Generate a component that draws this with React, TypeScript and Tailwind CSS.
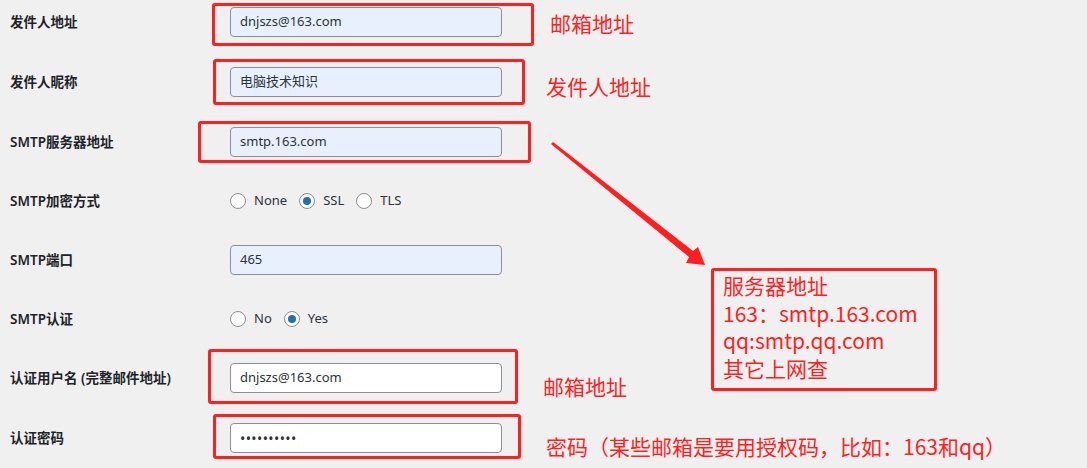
import React from "react";

const cjk = "font-['Segoe_UI','Noto_Sans','Noto_Sans_CJK_SC',sans-serif]";
const redText = "font-['Noto_Sans_CJK_SC','Noto_Sans',sans-serif] text-[#ff1f1f]";

type Row = {
	label: string;
	mt: string;
	kind: "input" | "radio" | "password";
	value?: string;
	filled?: boolean;
	options?: { name: string; checked?: boolean }[];
};

const rows: Row[] = [
	{ label: "发件人地址", mt: "mt-0", kind: "input", value: "dnjszs@163.com", filled: true },
	{ label: "发件人昵称", mt: "mt-[30px]", kind: "input", value: "电脑技术知识", filled: true },
	{ label: "SMTP服务器地址", mt: "mt-[30px]", kind: "input", value: "smtp.163.com", filled: true },
	{
		label: "SMTP加密方式",
		mt: "mt-[29px]",
		kind: "radio",
		options: [{ name: "None" }, { name: "SSL", checked: true }, { name: "TLS" }],
	},
	{ label: "SMTP端口", mt: "mt-[29px]", kind: "input", value: "465", filled: true },
	{
		label: "SMTP认证",
		mt: "mt-[29px]",
		kind: "radio",
		options: [{ name: "No" }, { name: "Yes", checked: true }],
	},
	{ label: "认证用户名 (完整邮件地址)", mt: "mt-[29px]", kind: "input", value: "dnjszs@163.com" },
	{ label: "认证密码", mt: "mt-[30px]", kind: "password", value: "••••••••••" },
];

function Radio({ name, checked }: { name: string; checked?: boolean }) {
	return (
		<label className="flex items-center gap-2">
			<span className="w-4 h-4 rounded-full border border-[#8c8f94] bg-white flex items-center justify-center">
				{checked && <span className="w-2 h-2 rounded-full bg-[#2271b1]" />}
			</span>
			<span className="text-[13px] text-[#2c3338]">{name}</span>
		</label>
	);
}

function Field({ row }: { row: Row }) {
	if (row.kind === "radio") {
		return (
			<div className="flex items-center gap-3">
				{row.options!.map((o) => (
					<Radio key={o.name} name={o.name} checked={o.checked} />
				))}
			</div>
		);
	}
	return (
		<div
			className={`w-[272px] h-[30px] rounded-[4px] border border-[#8c8f94] px-[9px] flex items-center text-[#2c3338] ${
				row.filled ? "bg-[#e8f0fe]" : "bg-white"
			} ${row.kind === "password" ? "text-[14px] tracking-[0.4px]" : "text-[13px]"}`}
		>
			{row.value}
		</div>
	);
}

function Box({ className }: { className: string }) {
	return <div className={`absolute border-[3px] border-[#ff1f1f] rounded-[3px] ${className}`} />;
}

export default function App() {
	return (
		<div className={`relative w-[1087px] h-[468px] overflow-hidden bg-[#f0f0f1] ${cjk}`}>
			{/* form rows */}
			<div className="flex flex-col pt-[7px]">
				{rows.map((row) => (
					<div key={row.label} className={`flex items-center h-[30px] ${row.mt}`}>
						<div className="w-[230px] pl-[10px] text-[13.5px] font-semibold text-[#1d2327]">
							{row.label}
						</div>
						<Field row={row} />
					</div>
				))}
			</div>

			{/* red markup drawn over the screenshot */}
			<Box className="left-[212px] top-[3px] w-[322px] h-[43px]" />
			<Box className="left-[213px] top-[59px] w-[312px] h-[46px]" />
			<Box className="left-[198px] top-[121px] w-[333px] h-[42px]" />
			<Box className="left-[208px] top-[349px] w-[310px] h-[55px]" />
			<Box className="left-[213px] top-[414px] w-[308px] h-[45px]" />

			<div className={`absolute left-[550px] top-[13px] text-[21px] leading-none ${redText}`}>邮箱地址</div>
			<div className={`absolute left-[546px] top-[76px] text-[21px] leading-none ${redText}`}>发件人地址</div>
			<div className={`absolute left-[543px] top-[376px] text-[21px] leading-none ${redText}`}>邮箱地址</div>
			<div className={`absolute left-[546px] top-[436px] text-[21px] leading-none ${redText}`}>
				密码（某些邮箱是要用授权码，比如：163和qq）
			</div>

			<div
				className={`absolute left-[711px] top-[268px] w-[226px] h-[123px] border-[3px] border-[#ff1f1f] rounded-[3px] pl-[9px] pt-[1px] text-[21px] leading-[27.5px] ${redText}`}
			>
				<div>服务器地址</div>
				<div>163：smtp.163.com</div>
				<div>qq:smtp.qq.com</div>
				<div>其它上网查</div>
			</div>

			<svg className="absolute inset-0 pointer-events-none" width="1087" height="468" viewBox="0 0 1087 468">
				<polygon
					points="551,144 553,142 693,251 698,247 705,265 686,263 689,257"
					fill="#ff1f1f"
				/>
			</svg>
		</div>
	);
}
